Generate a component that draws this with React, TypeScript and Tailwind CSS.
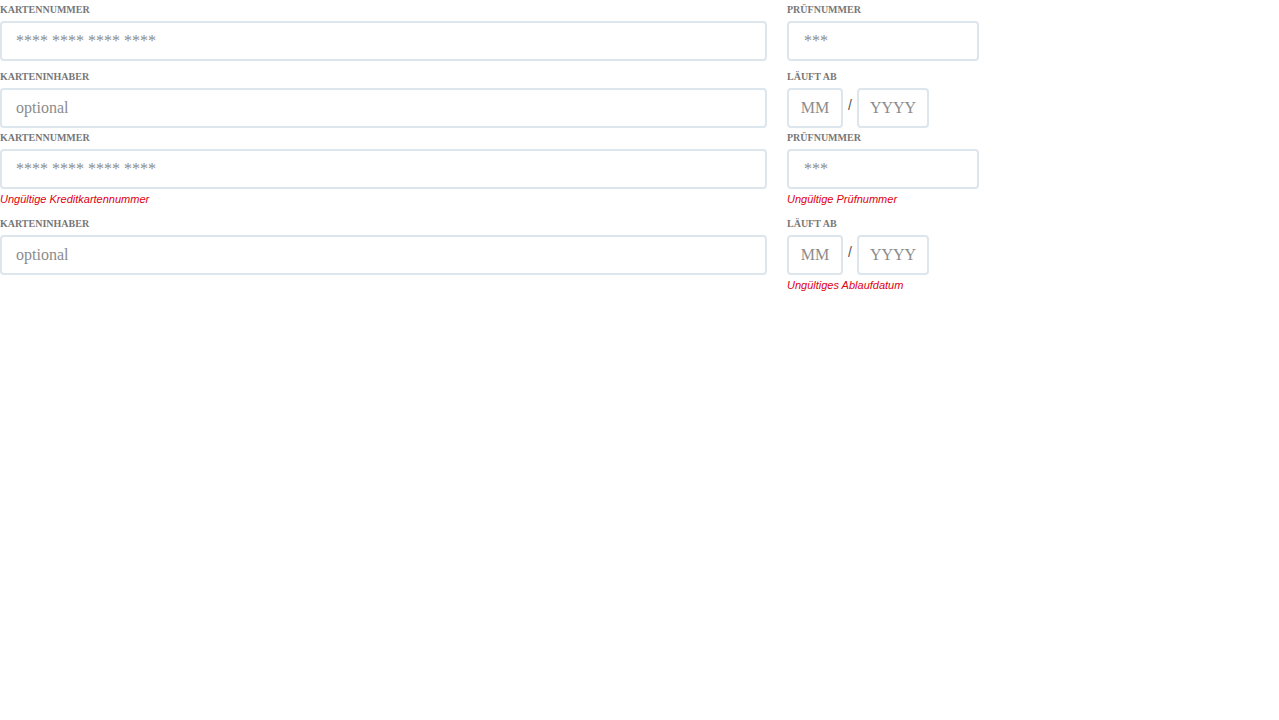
import React from 'react';

interface CardFormProps {
  errors?: boolean;
}

const labelCls =
  "block h-[21px] pt-[4px] text-[10px] leading-[12px] font-bold uppercase text-[#777777] font-['Liberation_Serif',serif]";
const inputCls =
  "h-[40px] rounded-[4px] border-2 border-[#dde5ed] bg-white text-[16px] text-[#333] placeholder:text-[#8c8c8c] font-['Liberation_Serif',serif] outline-none";
const errorCls =
  "mt-[3px] h-[16px] text-[11px] leading-[15px] italic text-[#e0000f] font-['Liberation_Sans',Arial,sans-serif]";

function CardForm({ errors }: CardFormProps) {
  return (
    <div className="flex flex-col gap-[6px]">
      {/* Card number + CVC */}
      <div className="flex gap-[20px]">
        <div className="w-[767px]">
          <label className={labelCls}>Kartennummer</label>
          <input className={`${inputCls} w-full px-[14px]`} placeholder="**** **** **** ****" />
          {errors && <p className={errorCls}>Ungültige Kreditkartennummer</p>}
        </div>
        <div className="w-[192px]">
          <label className={labelCls}>Prüfnummer</label>
          <input className={`${inputCls} w-full px-[15px]`} placeholder="***" />
          {errors && <p className={errorCls}>Ungültige Prüfnummer</p>}
        </div>
      </div>

      {/* Holder + expiry */}
      <div className="flex gap-[20px]">
        <div className="w-[767px]">
          <label className={labelCls}>Karteninhaber</label>
          <input className={`${inputCls} w-full px-[14px]`} placeholder="optional" />
        </div>
        <div className="w-[192px]">
          <label className={labelCls}>Läuft ab</label>
          <div className="flex items-start">
            <input className={`${inputCls} w-[56px] text-center`} placeholder="MM" />
            <span className="w-[14px] pt-[8px] text-center text-[14px] leading-[18px] text-[#555] font-['Liberation_Sans',Arial,sans-serif]">
              /
            </span>
            <input className={`${inputCls} w-[72px] text-center`} placeholder="YYYY" />
          </div>
          {errors && <p className={errorCls}>Ungültiges Ablaufdatum</p>}
        </div>
      </div>
    </div>
  );
}

export default function App() {
  return (
    <div className="min-h-[720px] w-[1279px] bg-white">
      <CardForm />
      <CardForm errors />
    </div>
  );
}
